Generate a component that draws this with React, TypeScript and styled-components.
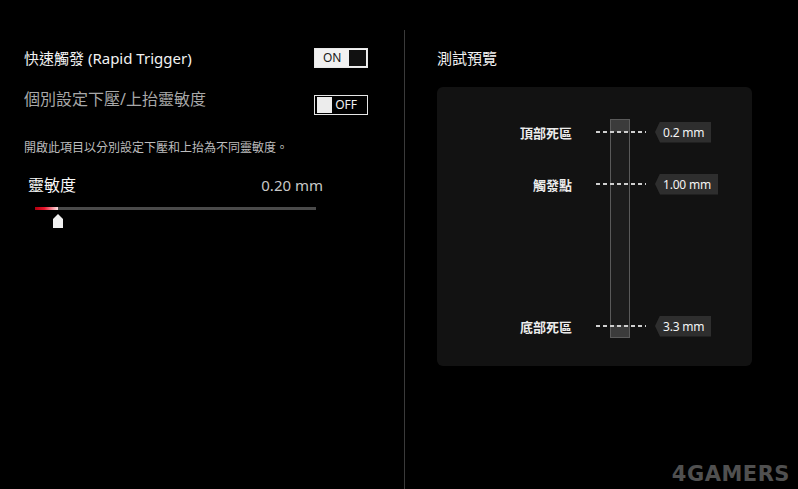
import React from "react";
import styled, { createGlobalStyle } from "styled-components";

const Global = createGlobalStyle`
  html, body { margin: 0; padding: 0; background: #000; }
  body { font-family: "Noto Sans", "Noto Sans CJK TC", sans-serif; }
`;

const Root = styled.div`
  position: relative;
  width: 798px;
  height: 489px;
  background: #000;
  display: flex;
  overflow: hidden;
  color: #eee;
`;

const LeftPanel = styled.section`
  width: 404px;
  padding: 48px 0 0 24px;
  box-sizing: border-box;
  display: flex;
  flex-direction: column;
`;

const Divider = styled.div`
  width: 1px;
  margin-top: 30px;
  background: #3a3a3a;
`;

const RightPanel = styled.section`
  flex: 1;
  padding: 48px 0 0 32px;
  display: flex;
  flex-direction: column;
`;

const Row = styled.div<{ $mt?: number; $align?: string }>`
  display: flex;
  justify-content: space-between;
  align-items: ${(p) => p.$align || "center"};
  width: 344px;
  margin-top: ${(p) => p.$mt || 0}px;
`;

const Title = styled.div<{ $muted?: boolean; $size?: number }>`
  font-size: ${(p) => p.$size || 15}px;
  line-height: 20px;
  color: ${(p) => (p.$muted ? "#a8a8a8" : "#f2f2f2")};
`;

const Toggle = styled.div<{ $on: boolean; $mt?: number }>`
  width: 54px;
  height: 20px;
  box-sizing: border-box;
  margin-top: ${(p) => p.$mt || 0}px;
  display: flex;
  align-items: center;
  flex-direction: ${(p) => (p.$on ? "row" : "row-reverse")};
  justify-content: space-between;
  padding: 1px 1px;
  background: ${(p) => (p.$on ? "#f1f1f1" : "#000")};
  border: 1px solid ${(p) => (p.$on ? "#e8e8e8" : "#e6e6e6")};
`;

const ToggleLabel = styled.span<{ $on: boolean }>`
  font-size: 12px;
  line-height: 16px;
  color: ${(p) => (p.$on ? "#1a1a1a" : "#f2f2f2")};
  padding: ${(p) => (p.$on ? "0 0 0 7px" : "0 9px 0 0")};
`;

const Knob = styled.span<{ $on: boolean }>`
  width: ${(p) => (p.$on ? 17 : 15)}px;
  height: 16px;
  margin: ${(p) => (p.$on ? "0 0 0 0" : "0 0 0 1px")};
  background: ${(p) => (p.$on ? "#111" : "#ececec")};
`;

const Desc = styled.p`
  margin: 25px 0 0;
  font-size: 12px;
  line-height: 16px;
  color: #bdbdbd;
`;

const SensRow = styled.div`
  margin-top: 18px;
  margin-left: 4px;
  width: 295px;
  display: flex;
  justify-content: space-between;
  align-items: center;
  line-height: 22px;
`;

const SensLabel = styled.span`
  font-size: 16px;
  color: #f8f8f8;
`;

const SensValue = styled.span`
  font-size: 15px;
  color: #c8c8c8;
`;

const Slider = styled.div`
  position: relative;
  margin: 11px 0 0 11px;
  width: 281px;
  height: 3px;
  background: #4a4a4a;
`;

const SliderFill = styled.div`
  position: absolute;
  left: 0;
  top: 0;
  bottom: 0;
  background: linear-gradient(to right, #b0000e, #e8142c 40%, #ffe4e6);
`;

const Thumb = styled.div`
  position: absolute;
  top: 7px;
  width: 10px;
  height: 14px;
  margin-left: -5px;
  background: #f0f0f0;
  clip-path: polygon(50% 0, 100% 35%, 100% 100%, 0 100%, 0 35%);
`;

const Card = styled.div`
  margin-top: 19px;
  width: 315px;
  height: 279px;
  background: #121212;
  border-radius: 6px;
  position: relative;
`;

const Bar = styled.div`
  position: absolute;
  left: 173px;
  top: 32px;
  width: 20px;
  height: 219px;
  box-sizing: border-box;
  border: 1px solid #5a5a5a;
  background: #1c1c1c;
  display: flex;
  flex-direction: column;
  justify-content: space-between;
`;

const DeadZone = styled.div`
  height: 12px;
  background: #3b3b3b;
`;

const Marker = styled.div`
  position: absolute;
  left: 0;
  right: 0;
  height: 22px;
  display: flex;
  align-items: center;
`;

const MarkerLabel = styled.span`
  width: 135px;
  text-align: right;
  font-size: 13px;
  font-weight: 700;
  color: #ececec;
`;

const Dashes = styled.span`
  margin-left: 24px;
  width: 50px;
  height: 2px;
  background: repeating-linear-gradient(
    to right,
    #cfcfcf 0,
    #cfcfcf 4px,
    transparent 4px,
    transparent 7px
  );
`;

const Tag = styled.span`
  margin-left: 9px;
  height: 21px;
  display: flex;
  align-items: center;
  padding: 0 7px 0 8px;
  background: #2e2e2e;
  font-size: 12px;
  letter-spacing: -0.2px;
  color: #f4f4f4;
  clip-path: polygon(5px 0, 100% 0, 100% 100%, 5px 100%, 0 50%);
`;

const Watermark = styled.div`
  position: absolute;
  right: 8px;
  bottom: 3px;
  font-family: "DejaVu Sans", sans-serif;
  font-weight: 700;
  font-size: 21px;
  letter-spacing: 0.5px;
  color: #505050;
`;

const markers = [
  { label: "頂部死區", value: "0.2 mm", center: 45 },
  { label: "觸發點", value: "1.00 mm", center: 97 },
  { label: "底部死區", value: "3.3 mm", center: 239 },
];

export default function App() {
  const fill = 23;
  return (
    <Root>
      <Global />
      <LeftPanel>
        <Row>
          <Title>快速觸發 (Rapid Trigger)</Title>
          <Toggle $on>
            <ToggleLabel $on>ON</ToggleLabel>
            <Knob $on />
          </Toggle>
        </Row>
        <Row $mt={21} $align="flex-start">
          <Title $muted $size={16}>個別設定下壓/上抬靈敏度</Title>
          <Toggle $on={false} $mt={6}>
            <ToggleLabel $on={false}>OFF</ToggleLabel>
            <Knob $on={false} />
          </Toggle>
        </Row>
        <Desc>開啟此項目以分別設定下壓和上抬為不同靈敏度。</Desc>
        <SensRow>
          <SensLabel>靈敏度</SensLabel>
          <SensValue>0.20 mm</SensValue>
        </SensRow>
        <Slider>
          <SliderFill style={{ width: fill }} />
          <Thumb style={{ left: fill }} />
        </Slider>
      </LeftPanel>
      <Divider />
      <RightPanel>
        <Title>測試預覽</Title>
        <Card>
          <Bar>
            <DeadZone />
            <DeadZone />
          </Bar>
          {markers.map((m) => (
            <Marker key={m.label} style={{ top: m.center - 11 }}>
              <MarkerLabel>{m.label}</MarkerLabel>
              <Dashes />
              <Tag>{m.value}</Tag>
            </Marker>
          ))}
        </Card>
      </RightPanel>
      <Watermark>4GAMERS</Watermark>
    </Root>
  );
}
